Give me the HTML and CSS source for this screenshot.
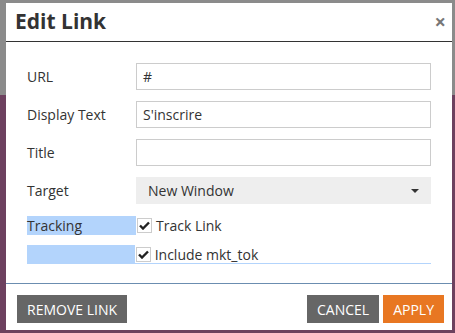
FILE: index.html
```html
<!DOCTYPE html>
<html lang="en">
<head>
    <meta charset="UTF-8">
    <title>Edit Link</title>
    <link rel="stylesheet" href="styles.css">
</head>
<body>
    <div class="dialog">
        <div class="dialog-header">
            <h1>Edit Link</h1>
            <span class="close">&times;</span>
        </div>
        <div class="dialog-body">
            <div class="row">
                <label>URL</label>
                <div class="field">#</div>
            </div>
            <div class="row">
                <label>Display Text</label>
                <div class="field">S'inscrire</div>
            </div>
            <div class="row">
                <label>Title</label>
                <div class="field"></div>
            </div>
            <div class="row">
                <label>Target</label>
                <div class="select">New Window<span class="caret"></span></div>
            </div>
            <div class="check-row first">
                <span class="sel-label">Tracking</span>
                <span class="check">
                    <span class="box"><svg width="11" height="9" viewBox="0 0 11 9"><path d="M1 4.5 L4 7.5 L10 1.5" fill="none" stroke="#222" stroke-width="2.4"/></svg></span>Track Link
                </span>
            </div>
            <div class="check-row">
                <span class="sel-label"></span>
                <span class="check underline">
                    <span class="box"><svg width="11" height="9" viewBox="0 0 11 9"><path d="M1 4.5 L4 7.5 L10 1.5" fill="none" stroke="#222" stroke-width="2.4"/></svg></span>Include mkt_tok
                </span>
            </div>
        </div>
        <div class="dialog-footer">
            <button class="btn grey">REMOVE LINK</button>
            <span class="spacer"></span>
            <button class="btn grey">CANCEL</button>
            <button class="btn orange">APPLY</button>
        </div>
    </div>
</body>
</html>
```
FILE: styles.css
```css
body {
    margin: 0;
    width: 455px;
    height: 333px;
    overflow: hidden;
    background: linear-gradient(to bottom, #8b8b8b 0, #8b8b8b 95px, #6d415f 95px);
    font-family: 'Open Sans', sans-serif;
    color: #333;
    font-size: 14px;
}
.dialog {
    margin: 3px 0 0 6px;
    width: 446px;
    height: 327px;
    background: #fff;
    display: flex;
    flex-direction: column;
}
.dialog-header {
    height: 38px;
    border-bottom: 1px solid #333;
    display: flex;
    align-items: center;
    padding: 0 6px 0 9px;
}
.dialog-header h1 {
    margin: 0;
    font-size: 21px;
    font-weight: bold;
    flex: 1;
    position: relative;
    top: -1px;
}
.close {
    color: #777;
    font-size: 20px;
    font-weight: bold;
    line-height: 1;
}
.dialog-body {
    padding: 21px 21px 0 21px;
    flex: 1;
}
.row {
    display: flex;
    align-items: center;
    margin-bottom: 11px;
}
.row label {
    width: 109px;
}
.field {
    flex: 1;
    height: 27px;
    box-sizing: border-box;
    border: 1px solid #ccc;
    padding: 0 6px;
    line-height: 25px;
}
.select {
    flex: 1;
    height: 27px;
    background: #eee;
    padding: 0 12px;
    line-height: 27px;
    display: flex;
    justify-content: space-between;
    align-items: center;
}
.caret {
    width: 0;
    height: 0;
    border-left: 4px solid transparent;
    border-right: 4px solid transparent;
    border-top: 4px solid #333;
}
.check-row {
    display: flex;
    height: 19px;
    margin-bottom: 10px;
    line-height: 19px;
}
.check-row.first {
    margin-top: 12px;
}
.sel-label {
    width: 109px;
    background: #b3d4fc;
}
.check {
    display: flex;
    align-items: center;
}
.check.underline {
    width: 300px;
    border-bottom: 1px solid #b3d4fc;
}
.box {
    width: 13px;
    height: 13px;
    border: 1px solid #ccc;
    margin: 0 4px 0 1px;
    display: flex;
    align-items: center;
    justify-content: center;
}
.dialog-footer {
    border-top: 1px solid #6b8db0;
    display: flex;
    padding: 11px 8px 7px 11px;
}
.spacer {
    flex: 1;
}
.btn {
    height: 28px;
    border: none;
    color: #fff;
    font-family: 'Open Sans', sans-serif;
    font-size: 14px;
    padding: 0 10px;
    margin-left: 4px;
}
.btn:first-child {
    margin-left: 0;
}
.grey {
    background: #666;
}
.orange {
    background: #e87722;
}
```
